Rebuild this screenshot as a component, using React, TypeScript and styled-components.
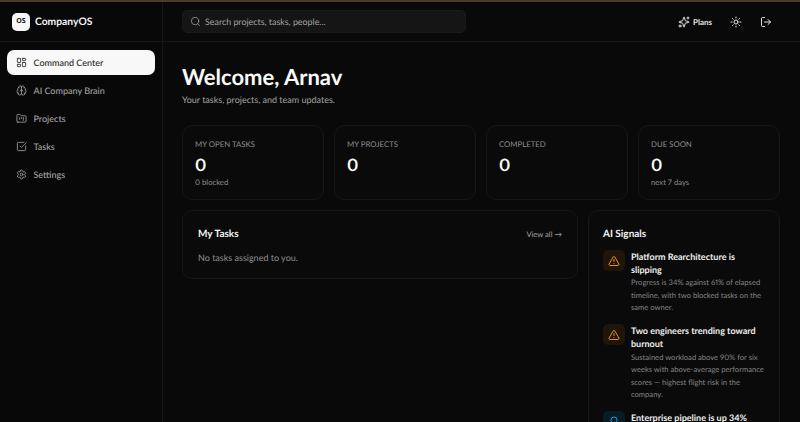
import styled, { createGlobalStyle } from "styled-components";
import {
  LayoutDashboard,
  Brain,
  FolderKanban,
  SquareCheckBig,
  Settings,
  Search,
  Sparkles,
  Sun,
  LogOut,
  TriangleAlert,
  Lightbulb,
} from "lucide-react";

const GlobalStyle = createGlobalStyle`
  html, body {
    margin: 0;
    height: 100%;
    background: #090909;
    overflow: hidden;
  }
  * {
    box-sizing: border-box;
  }
  body {
    font-family: "Lato", "Noto Sans", sans-serif;
    color: #f5f5f5;
    text-rendering: geometricPrecision;
    font-variant-numeric: proportional-nums;
  }
`;

const Shell = styled.div`
  width: 800px;
  height: 422px;
  display: flex;
  flex-direction: column;
  overflow: hidden;
  background: #090909;
`;

const TopLine = styled.div`
  height: 2px;
  flex: none;
  background: #4a3a2c;
`;

const Body = styled.div`
  flex: 1;
  display: flex;
  min-height: 0;
`;

const Sidebar = styled.aside`
  width: 163px;
  flex: none;
  border-right: 1px solid #161616;
  background: #080808;
`;

const Brand = styled.div`
  height: 40px;
  display: flex;
  align-items: center;
  gap: 5px;
  padding: 0 12px;
  border-bottom: 1px solid #161616;
`;

const BrandMark = styled.div`
  width: 18px;
  height: 18px;
  border-radius: 5px;
  background: #f7f7f7;
  color: #111;
  display: flex;
  align-items: center;
  justify-content: center;
  font-family: "Noto Sans", sans-serif;
  font-size: 7px;
  font-weight: 700;
`;

const BrandName = styled.span`
  font-size: 10.3px;
  font-weight: 700;
  color: #f5f5f5;
`;

const Nav = styled.nav`
  display: flex;
  flex-direction: column;
  gap: 3px;
  padding: 8px 7px;
`;

const NavItem = styled.div<{ $active?: boolean }>`
  height: 25px;
  display: flex;
  align-items: center;
  gap: 7px;
  padding: 0 8.5px;
  border-radius: 7px;
  font-size: 9px;
  font-weight: 500;
  background: ${(p) => (p.$active ? "#f8f8f8" : "transparent")};
  color: ${(p) => (p.$active ? "#262626" : "#a3a3a3")};
`;

const Content = styled.div`
  flex: 1;
  min-width: 0;
  display: flex;
  flex-direction: column;
`;

const Header = styled.header`
  height: 40px;
  flex: none;
  display: flex;
  align-items: center;
  justify-content: space-between;
  padding: 0 28px 0 19px;
  border-bottom: 1px solid #161616;
`;

const SearchBox = styled.div`
  width: 284px;
  height: 23px;
  display: flex;
  align-items: center;
  gap: 4px;
  padding: 0 7px;
  border-radius: 5px;
  background: #151515;
  border: 1px solid #1a1a1a;
  font-size: 8.9px;
  color: #a3a3a3;
`;

const HeaderActions = styled.div`
  display: flex;
  align-items: center;
  gap: 18px;
  color: #e5e5e5;
`;

const PlansLink = styled.div`
  display: flex;
  align-items: center;
  gap: 3px;
  font-size: 8px;
  font-weight: 700;
`;

const Main = styled.main`
  flex: 1;
  min-height: 0;
  padding: 19px 20px 0 19px;
  overflow: hidden;
`;

const Title = styled.h1`
  margin: 0;
  font-size: 22px;
  line-height: 32px;
  font-weight: 700;
  color: #fafafa;
`;

const Subtitle = styled.p`
  margin: 0;
  font-size: 9px;
  line-height: 14px;
  color: #a3a3a3;
`;

const StatGrid = styled.div`
  display: grid;
  grid-template-columns: repeat(4, 142px);
  gap: 10px;
  margin-top: 18px;
`;

const Card = styled.section`
  border: 1px solid #161616;
  border-radius: 10px;
  background: #0a0a0a;
`;

const StatCard = styled(Card)`
  height: 75px;
  padding: 12px;
`;

const StatLabel = styled.div`
  font-size: 7.8px;
  line-height: 12px;
  color: #8f8f8f;
`;

const StatValue = styled.div`
  font-size: 17px;
  line-height: 20px;
  margin-top: 5px;
  font-weight: 700;
  color: #fafafa;
`;

const StatNote = styled.div`
  font-size: 7.7px;
  line-height: 12px;
  margin-top: 1px;
  color: #8f8f8f;
`;

const Panels = styled.div`
  display: grid;
  grid-template-columns: 396px 192px;
  gap: 10px;
  margin-top: 10px;
  align-items: start;
`;

const TasksPanel = styled(Card)`
  height: 69px;
  padding: 15px 15px;
`;

const PanelHead = styled.div`
  display: flex;
  align-items: center;
  justify-content: space-between;
`;

const PanelTitle = styled.h2`
  margin: 0;
  font-size: 10px;
  line-height: 16px;
  font-weight: 700;
  color: #f5f5f5;
`;

const ViewAll = styled.span`
  font-size: 7.6px;
  color: #a3a3a3;
`;

const EmptyNote = styled.p`
  margin: 9px 0 0;
  font-size: 9px;
  line-height: 13px;
  color: #8f8f8f;
`;

const SignalsPanel = styled(Card)`
  padding: 15px 14px 0;
  height: 260px;
`;

const SignalList = styled.div`
  display: flex;
  flex-direction: column;
  gap: 10.5px;
  margin-top: 8px;
`;

const Signal = styled.div`
  display: flex;
  gap: 6px;
`;

const SignalIcon = styled.div<{ $tone: string }>`
  width: 22px;
  height: 21px;
  flex: none;
  border-radius: 5px;
  display: flex;
  align-items: center;
  justify-content: center;
  background: ${(p) => (p.$tone === "warn" ? "#1f1508" : "#081c26")};
  color: ${(p) => (p.$tone === "warn" ? "#e8900c" : "#0ea5e9")};
`;

const SignalCopy = styled.div`
  min-width: 0;
  padding-top: 1px;
`;

const SignalTitle = styled.div`
  font-size: 9px;
  line-height: 12.7px;
  font-weight: 700;
  color: #f0f0f0;
  max-width: 132px;
`;

const SignalText = styled.div`
  font-size: 7.6px;
  line-height: 12.5px;
  color: #858585;
`;

const navItems = [
  { label: "Command Center", icon: LayoutDashboard, active: true },
  { label: "AI Company Brain", icon: Brain },
  { label: "Projects", icon: FolderKanban },
  { label: "Tasks", icon: SquareCheckBig },
  { label: "Settings", icon: Settings },
];

const stats = [
  { label: "MY OPEN TASKS", value: "0", note: "0 blocked" },
  { label: "MY PROJECTS", value: "0" },
  { label: "COMPLETED", value: "0" },
  { label: "DUE SOON", value: "0", note: "next 7 days" },
];

const signals = [
  {
    tone: "warn",
    title: "Platform Rearchitecture is slipping",
    text: "Progress is 34% against 61% of elapsed timeline, with two blocked tasks on the same owner.",
  },
  {
    tone: "warn",
    title: "Two engineers trending toward burnout",
    text: "Sustained workload above 90% for six weeks with above-average performance scores — highest flight risk in the company.",
  },
  {
    tone: "info",
    title: "Enterprise pipeline is up 34%",
    text: "",
  },
];

function App(): JSX.Element {
  return (
    <>
      <GlobalStyle />
      <Shell>
        <TopLine />
        <Body>
          <Sidebar>
            <Brand>
              <BrandMark>OS</BrandMark>
              <BrandName>CompanyOS</BrandName>
            </Brand>
            <Nav>
              {navItems.map((item) => (
                <NavItem key={item.label} $active={item.active}>
                  <item.icon size={11} strokeWidth={1.8} />
                  {item.label}
                </NavItem>
              ))}
            </Nav>
          </Sidebar>
          <Content>
            <Header>
              <SearchBox>
                <Search size={11} strokeWidth={1.6} />
                Search projects, tasks, people...
              </SearchBox>
              <HeaderActions>
                <PlansLink>
                  <Sparkles size={12} strokeWidth={2} />
                  Plans
                </PlansLink>
                <Sun size={12} strokeWidth={2} />
                <LogOut size={12} strokeWidth={2} />
              </HeaderActions>
            </Header>
            <Main>
              <Title>Welcome, Arnav</Title>
              <Subtitle>Your tasks, projects, and team updates.</Subtitle>
              <StatGrid>
                {stats.map((stat) => (
                  <StatCard key={stat.label}>
                    <StatLabel>{stat.label}</StatLabel>
                    <StatValue>{stat.value}</StatValue>
                    {stat.note && <StatNote>{stat.note}</StatNote>}
                  </StatCard>
                ))}
              </StatGrid>
              <Panels>
                <TasksPanel>
                  <PanelHead>
                    <PanelTitle>My Tasks</PanelTitle>
                    <ViewAll>View all →</ViewAll>
                  </PanelHead>
                  <EmptyNote>No tasks assigned to you.</EmptyNote>
                </TasksPanel>
                <SignalsPanel>
                  <PanelTitle>AI Signals</PanelTitle>
                  <SignalList>
                    {signals.map((signal) => (
                      <Signal key={signal.title}>
                        <SignalIcon $tone={signal.tone}>
                          {signal.tone === "warn" ? (
                            <TriangleAlert size={12} strokeWidth={2} />
                          ) : (
                            <Lightbulb size={12} strokeWidth={2} />
                          )}
                        </SignalIcon>
                        <SignalCopy>
                          <SignalTitle>{signal.title}</SignalTitle>
                          <SignalText>{signal.text}</SignalText>
                        </SignalCopy>
                      </Signal>
                    ))}
                  </SignalList>
                </SignalsPanel>
              </Panels>
            </Main>
          </Content>
        </Body>
      </Shell>
    </>
  );
}

export default App;
